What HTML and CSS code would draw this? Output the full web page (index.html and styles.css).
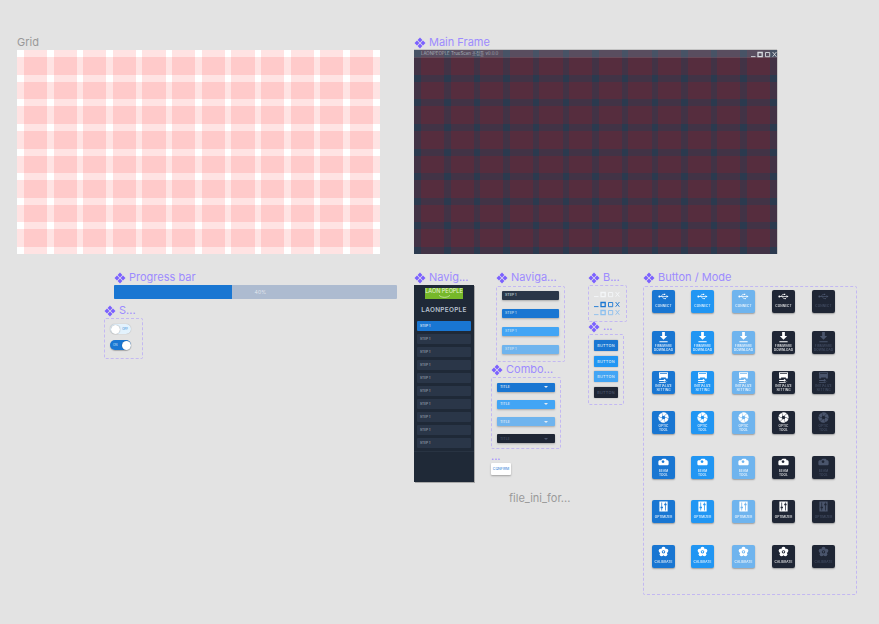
FILE: index.html
```html
<!DOCTYPE html>
<html lang="en">
<head>
<meta charset="utf-8">
<title>LAONPEOPLE canvas</title>
<link rel="stylesheet" href="styles.css">
</head>
<body>
<svg class="defs" width="0" height="0" aria-hidden="true">
  <symbol id="comp" viewBox="0 0 12 12"><path d="M6 .5 8.400 3 6 5.400 3.600 3zM3 3.600 5.400 6 3 8.400.5 6zM9 3.600 11.500 6 9 8.400 6.600 6zM6 6.600 8.400 9 6 11.500 3.600 9z" fill="currentColor"/></symbol>
  <symbol id="usb" viewBox="0 0 12 12"><path d="M1.500 6h8" stroke="currentColor" stroke-width=".8" fill="none"/><path d="M3.500 6 5 3.700h1.600M4.600 6l1.500 2.200h1.200" stroke="currentColor" stroke-width=".7" fill="none"/><circle cx="1.500" cy="6" r="1.100" fill="currentColor"/><path d="M9.200 4.700 11.500 6 9.200 7.300z" fill="currentColor"/><rect x="6.500" y="3" width="1.400" height="1.400" fill="currentColor"/><rect x="7.200" y="7.600" width="1.300" height="1.300" fill="currentColor"/></symbol>
  <symbol id="down" viewBox="0 0 12 12"><path d="M4.500 0h3v4.400H10L6 8.400 2 4.400h2.500zM1.500 10h9v1.300h-9z" fill="currentColor"/></symbol>
  <symbol id="init" viewBox="0 0 12 12"><path d="M1.200 .4h9.600v6.600H8.600V6H3.400v1H1.200zM2.200 1.300v1h7.600v-1z" fill="currentColor" fill-rule="evenodd"/><path d="M3 3.300h6v1.600H3z" fill="currentColor"/><path d="M1.200 8.600h5.200V7.400l2.400 1.700-2.400 1.700V9.800H1.200zM10.800 10.400H8.400v1.200H1.200v-.6h7z" fill="currentColor"/></symbol>
  <symbol id="optic" viewBox="0 0 12 12"><g fill="currentColor"><path id="blade" d="M7.900 6.100 7.300 7.800 8 11.300A5.700 5.700 0 0 0 11.500 7.300z"/><use href="#blade" transform="rotate(60 6 6)"/><use href="#blade" transform="rotate(120 6 6)"/><use href="#blade" transform="rotate(180 6 6)"/><use href="#blade" transform="rotate(240 6 6)"/><use href="#blade" transform="rotate(300 6 6)"/></g></symbol>
  <symbol id="beam" viewBox="0 0 12 12"><path d="M2 3.600h1.600C4 2.400 5 2 6 2h1.600c1 0 1.600.6 1.800 1.600H10c1 0 1.600.7 1.600 1.600v2.400c0 .9-.6 1.400-1.600 1.400H2C1 9 .4 8.500 .4 7.600V5.200C.4 4.300 1 3.600 2 3.600zM5.500 3.600a1.500 1.500 0 1 0 .01 0z" fill="currentColor" fill-rule="evenodd"/></symbol>
  <symbol id="opt" viewBox="0 0 12 12"><path d="M1.500 .5h9v11h-9zM3.700 1.700v4.500h-.9v1.600h.9v2.500h.8V7.800h.9V6.200h-.9V1.700zM7.700 1.700v1.400h-.9v1.600h.9v5.600h.8V4.700h.9V3.100h-.9V1.700z" fill="currentColor" fill-rule="evenodd"/></symbol>
  <mask id="calmask"><rect width="12" height="12" fill="#fff"/><circle cx="6" cy="6.400" r="1.900" fill="#000"/><circle cx="6" cy="6.400" r=".9" fill="#fff"/></mask>
  <symbol id="cal" viewBox="0 0 12 12"><g fill="currentColor" mask="url(#calmask)"><circle cx="6" cy="3" r="2.200"/><circle cx="9.100" cy="5.300" r="2.200"/><circle cx="8" cy="9" r="2.200"/><circle cx="4" cy="9" r="2.200"/><circle cx="2.900" cy="5.300" r="2.200"/><circle cx="6" cy="6.400" r="3.200"/></g></symbol>
  <symbol id="winbtns" viewBox="0 0 26 7"><g fill="none" stroke="currentColor" stroke-width=".9"><path d="M0 5.600h4.500"/><path d="M7 1.500h4.200v4.200H7z" stroke-width="1.300"/><path d="M14.500 1.500h4.200v4.200h-4.200z"/><path d="m21.600 1 3.800 4.800M25.400 1l-3.800 4.800"/></g></symbol>
</svg>

<main class="canvas">
  <section class="comp at-grid">
    <h2 class="plain-label">Grid</h2>
    <div class="gridbox light">
      <div class="cols"><i></i><i></i><i></i><i></i><i></i><i></i><i></i><i></i><i></i><i></i><i></i><i></i></div>
      <div class="rows"><i></i><i></i><i></i><i></i><i></i><i></i><i></i><i></i></div>
    </div>
  </section>

  <section class="comp at-main">
    <h2 class="label"><svg class="ci"><use href="#comp"/></svg>Main Frame</h2>
    <div class="gridbox dark">
      <div class="cols"><i></i><i></i><i></i><i></i><i></i><i></i><i></i><i></i><i></i><i></i><i></i><i></i></div>
      <div class="rows"><i></i><i></i><i></i><i></i><i></i><i></i><i></i><i></i></div>
      <div class="titlebar"><span class="title-text">LAONPEOPLE TrueScan 조정툴 v0.0.0</span><svg class="title-btns"><use href="#winbtns"/></svg></div>
    </div>
  </section>

  <section class="comp at-progress">
    <h2 class="label"><svg class="ci"><use href="#comp"/></svg>Progress bar</h2>
    <div class="progress"><div class="progress-fill"></div><span class="progress-text">40%</span></div>
  </section>

  <section class="comp at-switch">
    <h2 class="label"><svg class="ci"><use href="#comp"/></svg>S...</h2>
    <div class="dashed switches">
      <div class="toggle off"><b class="knob"></b><span>OFF</span></div>
      <div class="toggle on"><span>ON</span><b class="knob"></b></div>
    </div>
  </section>

  <section class="comp at-nav">
    <h2 class="label"><svg class="ci"><use href="#comp"/></svg>Navig...</h2>
    <div class="nav">
      <div class="logo">LAON PEOPLE<svg class="smile" viewBox="0 0 20 5"><path d="M1 .5C5 5 15 5 19 .5" fill="none" stroke="currentColor" stroke-width="1"/></svg></div>
      <div class="brand">LAONPEOPLE</div>
      <ul class="steps">
        <li class="step active">STEP 1</li><li class="step">STEP 1</li><li class="step">STEP 1</li><li class="step">STEP 1</li><li class="step">STEP 1</li>
        <li class="step">STEP 1</li><li class="step">STEP 1</li><li class="step">STEP 1</li><li class="step">STEP 1</li><li class="step">STEP 1</li>
      </ul>
    </div>
  </section>

  <section class="comp at-nav2">
    <h2 class="label lower"><svg class="ci"><use href="#comp"/></svg>Naviga...</h2>
    <div class="dashed nav-states">
      <div class="state s-dark">STEP 1</div>
      <div class="state s-blue">STEP 1</div>
      <div class="state s-sky">STEP 1</div>
      <div class="state s-pale">STEP 1</div>
    </div>
  </section>

  <section class="comp at-combo">
    <h2 class="label"><svg class="ci"><use href="#comp"/></svg>Combo...</h2>
    <div class="dashed combos">
      <div class="combo s-blue">TITLE<i class="caret"></i></div>
      <div class="combo s-sky">TITLE<i class="caret"></i></div>
      <div class="combo s-pale">TITLE<i class="caret"></i></div>
      <div class="combo s-black dim">TITLE<i class="caret"></i></div>
    </div>
  </section>

  <section class="comp at-mini">
    <h2 class="label dots">...</h2>
    <div class="mini-btn">CONFIRM</div>
  </section>

  <div class="file-label">file_ini_for...</div>

  <section class="comp at-b">
    <h2 class="label"><svg class="ci"><use href="#comp"/></svg>B...</h2>
    <div class="dashed winrows">
      <svg class="winrow w-white"><use href="#winbtns"/></svg>
      <svg class="winrow w-blue"><use href="#winbtns"/></svg>
      <svg class="winrow w-pale"><use href="#winbtns"/></svg>
    </div>
  </section>

  <section class="comp at-btns">
    <h2 class="label"><svg class="ci"><use href="#comp"/></svg>...</h2>
    <div class="dashed buttons">
      <div class="btn s-blue">BUTTON</div>
      <div class="btn s-mid">BUTTON</div>
      <div class="btn s-sky">BUTTON</div>
      <div class="btn s-black dim">BUTTON</div>
    </div>
  </section>

  <section class="comp at-mode">
    <h2 class="label lower"><svg class="ci"><use href="#comp"/></svg>Button / Mode</h2>
    <div class="dashed modes">
      <div class="mode s-blue"><svg class="mi"><use href="#usb"/></svg><span class="one">CONNECT</span></div>
      <div class="mode s-mid"><svg class="mi"><use href="#usb"/></svg><span class="one">CONNECT</span></div>
      <div class="mode s-pale"><svg class="mi"><use href="#usb"/></svg><span class="one">CONNECT</span></div>
      <div class="mode s-black"><svg class="mi"><use href="#usb"/></svg><span class="one">CONNECT</span></div>
      <div class="mode s-black dim"><svg class="mi"><use href="#usb"/></svg><span class="one">CONNECT</span></div>

      <div class="mode s-blue"><svg class="mi"><use href="#down"/></svg><span>FIRMWARE<br>DOWNLOAD</span></div>
      <div class="mode s-mid"><svg class="mi"><use href="#down"/></svg><span>FIRMWARE<br>DOWNLOAD</span></div>
      <div class="mode s-pale"><svg class="mi"><use href="#down"/></svg><span>FIRMWARE<br>DOWNLOAD</span></div>
      <div class="mode s-black"><svg class="mi"><use href="#down"/></svg><span>FIRMWARE<br>DOWNLOAD</span></div>
      <div class="mode s-black dim"><svg class="mi"><use href="#down"/></svg><span>FIRMWARE<br>DOWNLOAD</span></div>

      <div class="mode s-blue"><svg class="mi"><use href="#init"/></svg><span>INITIALIZE<br>SETTING</span></div>
      <div class="mode s-mid"><svg class="mi"><use href="#init"/></svg><span>INITIALIZE<br>SETTING</span></div>
      <div class="mode s-pale"><svg class="mi"><use href="#init"/></svg><span>INITIALIZE<br>SETTING</span></div>
      <div class="mode s-black"><svg class="mi"><use href="#init"/></svg><span>INITIALIZE<br>SETTING</span></div>
      <div class="mode s-black dim"><svg class="mi"><use href="#init"/></svg><span>INITIALIZE<br>SETTING</span></div>

      <div class="mode s-blue"><svg class="mi"><use href="#optic"/></svg><span>OPTIC<br>TOOL</span></div>
      <div class="mode s-mid"><svg class="mi"><use href="#optic"/></svg><span>OPTIC<br>TOOL</span></div>
      <div class="mode s-pale"><svg class="mi"><use href="#optic"/></svg><span>OPTIC<br>TOOL</span></div>
      <div class="mode s-black"><svg class="mi"><use href="#optic"/></svg><span>OPTIC<br>TOOL</span></div>
      <div class="mode s-black dim"><svg class="mi"><use href="#optic"/></svg><span>OPTIC<br>TOOL</span></div>

      <div class="mode s-blue"><svg class="mi"><use href="#beam"/></svg><span>BEAM<br>TOOL</span></div>
      <div class="mode s-mid"><svg class="mi"><use href="#beam"/></svg><span>BEAM<br>TOOL</span></div>
      <div class="mode s-pale"><svg class="mi"><use href="#beam"/></svg><span>BEAM<br>TOOL</span></div>
      <div class="mode s-black"><svg class="mi"><use href="#beam"/></svg><span>BEAM<br>TOOL</span></div>
      <div class="mode s-black dim"><svg class="mi"><use href="#beam"/></svg><span>BEAM<br>TOOL</span></div>

      <div class="mode s-blue"><svg class="mi"><use href="#opt"/></svg><span class="one low">OPTIMIZER</span></div>
      <div class="mode s-mid"><svg class="mi"><use href="#opt"/></svg><span class="one low">OPTIMIZER</span></div>
      <div class="mode s-pale"><svg class="mi"><use href="#opt"/></svg><span class="one low">OPTIMIZER</span></div>
      <div class="mode s-black"><svg class="mi"><use href="#opt"/></svg><span class="one low">OPTIMIZER</span></div>
      <div class="mode s-black dim"><svg class="mi"><use href="#opt"/></svg><span class="one low">OPTIMIZER</span></div>

      <div class="mode s-blue"><svg class="mi"><use href="#cal"/></svg><span class="one low">CALIBRATE</span></div>
      <div class="mode s-mid"><svg class="mi"><use href="#cal"/></svg><span class="one low">CALIBRATE</span></div>
      <div class="mode s-pale"><svg class="mi"><use href="#cal"/></svg><span class="one low">CALIBRATE</span></div>
      <div class="mode s-black"><svg class="mi"><use href="#cal"/></svg><span class="one low">CALIBRATE</span></div>
      <div class="mode s-black dim"><svg class="mi"><use href="#cal"/></svg><span class="one low">CALIBRATE</span></div>
    </div>
  </section>
</main>
</body>
</html>
```

FILE: styles.css
```css
* { box-sizing: border-box; }
html, body { margin: 0; padding: 0; }
body { background: #e3e3e3; font-family: Inter, "Noto Sans CJK KR", sans-serif; overflow: hidden; }
.defs { position: absolute; }
.canvas { position: relative; width: 879px; height: 624px; }

/* Frames sit on a free canvas */
.comp { position: absolute; }
.at-grid { left: 17px; top: 35px; width: 363px; }
.at-main { left: 414px; top: 35px; width: 363px; }
.at-progress { left: 114px; top: 270px; width: 283px; }
.at-switch { left: 104px; top: 303px; width: 39px; }
.at-nav { left: 414px; top: 270px; width: 60px; }
.at-nav2 { left: 496px; top: 270px; width: 69px; }
.at-combo { left: 491px; top: 362px; width: 70px; }
.at-mini { left: 491px; top: 449px; width: 40px; }
.at-b { left: 588px; top: 270px; width: 39px; }
.at-btns { left: 588px; top: 319px; width: 36px; }
.at-mode { left: 643px; top: 270px; width: 214px; }
.file-label { position: absolute; left: 509px; top: 491px; font-size: 11px; line-height: 14px; color: #9a9a9a; }

/* Labels */
.label, .plain-label { margin: 0; height: 15px; font-size: 11px; line-height: 15px; font-weight: 400; white-space: nowrap; display: flex; align-items: center; }
.plain-label { color: #999; }
.label { color: #9d8bff; }
.lower { margin-bottom: 1px; }
.ci { width: 12px; height: 12px; margin-right: 3px; color: #7b61ff; flex: none; }
.dots { height: 14px; }

/* Layout grids */
.gridbox { display: grid; height: 204px; }
.gridbox > * { grid-area: 1 / 1; }
.light { background: #fff; }
.dark { background: #2b3a4f; box-shadow: 0 -1px 0 #c4c4c4, 1px 0 0 #c4c4c4; }
.cols { display: grid; grid-template-columns: repeat(12, 1fr); column-gap: 6.400px; padding: 0 7px; }
.rows { display: grid; grid-template-rows: repeat(8, 1fr); row-gap: 7px; padding: 7px 0; }
.cols i, .rows i { background: rgba(255, 0, 0, .11); }
.titlebar { align-self: start; height: 8px; padding: 0 .5px 0 7px; display: flex; align-items: center; justify-content: space-between; background: rgba(185, 185, 195, .2); }
.title-text { font-size: 4.400px; line-height: 8px; color: #a3aab5; white-space: nowrap; }
.title-btns { width: 26px; height: 7px; color: #d8dbe0; }

/* Progress */
.progress { height: 14px; background: #adbbd0; border-radius: 1px; display: flex; align-items: center; }
.progress-fill { width: 117.500px; height: 100%; background: #1976d2; border-radius: 1px 0 0 1px; }
.progress-text { margin-left: 23px; font-size: 5px; color: #e3e8ef; letter-spacing: .2px; }

/* Dashed component sets */
.dashed { border: 1px dashed #c3b8f2; border-radius: 2px; }
.switches { height: 41px; padding: 5px 5px; display: flex; flex-direction: column; gap: 6px; }
.toggle { width: 21px; height: 10px; border-radius: 5px; display: flex; align-items: center; justify-content: space-between; font-size: 3px; padding: 0 .5px; }
.toggle.off { background: #e3f2fd; color: #1976d2; padding-right: 3px; box-shadow: 0 0 1px rgba(0, 0, 0, .3); }
.toggle.on { background: #1976d2; color: #cfe4f8; padding-left: 3px; box-shadow: 0 1px 1px rgba(0, 0, 0, .25); }
.knob { width: 9px; height: 9px; border-radius: 50%; background: #fff; box-shadow: 0 0 1px rgba(0, 0, 0, .5); }

/* Left navigation */
.nav { height: 197px; background: #1f2937; box-shadow: 1px 1px 0 #a9a9a9; padding-top: 3px; display: flex; flex-direction: column; align-items: center; }
.logo { width: 38px; height: 11px; background: #76b82a; color: #eaf5dc; font-size: 5.500px; line-height: 7px; text-align: center; white-space: nowrap; }
.smile { display: block; width: 13px; height: 3px; margin: 0 auto; color: #eaf5dc; }
.brand { margin-top: 6px; height: 11px; font-size: 6.400px; line-height: 11px; font-weight: 600; letter-spacing: .3px; color: #b8c2d0; }
.steps { list-style: none; margin: 5px 0 0; padding: 0 0 3px; width: 100%; border-bottom: 1px solid #283342; display: flex; flex-direction: column; gap: 3px; align-items: center; }
.step { width: 54px; height: 10px; padding-left: 3px; background: #2a3648; border-radius: 1px; font-size: 3.200px; line-height: 10px; font-weight: 500; color: #a0aaba; }
.step.active { background: #1976d2; color: #f2f6fb; }

/* Colour states */
.s-dark { background: #2a3648; }
.s-blue { background: #1976d2; }
.s-mid { background: #2196f3; }
.s-sky { background: #42a5f5; }
.s-pale { background: #6fb4ee; }
.s-black { background: #1f2635; }

/* Navigation states */
.nav-states { height: 76px; padding: 4px 5px; display: flex; flex-direction: column; gap: 9px; }
.state { height: 9px; padding-left: 3px; font-size: 3.600px; line-height: 9px; color: #dfe7f0; box-shadow: 0 1px 2px rgba(0, 0, 0, .25); border-radius: 1px; }

/* Combo */
.combos { height: 72px; padding: 5px 5px; display: flex; flex-direction: column; gap: 8.500px; }
.combo { height: 9px; padding: 0 7px 0 3px; font-size: 3.600px; font-weight: 500; color: #e4ecf5; display: flex; align-items: center; justify-content: space-between; box-shadow: 0 1px 2px rgba(0, 0, 0, .25); border-radius: 1px; }
.caret { width: 0; height: 0; border: 2px solid transparent; border-top: 2px solid currentColor; border-bottom: 0; }
.mini-btn { width: 20px; height: 12px; background: #fff; border-radius: 1px; box-shadow: 0 1px 2px rgba(0, 0, 0, .3); font-size: 3.500px; line-height: 12px; text-align: center; color: #1976d2; }

/* Window buttons */
.winrows { height: 37px; padding: 5px 5px 0; display: flex; flex-direction: column; gap: 3px; }
.winrow { width: 26px; height: 7px; flex: none; }
.w-white { color: #f4f6f8; }
.w-blue { color: #1976d2; }
.w-pale { color: #8cc0ee; margin-top: -2px; }

/* Buttons */
.buttons { height: 71px; padding: 5px 5px; display: flex; flex-direction: column; gap: 4.500px; }
.btn { height: 11px; font-size: 3.800px; line-height: 11px; font-weight: 500; letter-spacing: .3px; text-align: center; color: #dfe9f4; box-shadow: 0 0 1.500px rgba(0, 0, 0, .4); border-radius: 1px; }
.dim { color: #4a556c; }

/* Mode buttons */
.modes { height: 309px; padding: 3px 0 0 8px; display: grid; grid-template-columns: 39px 41px 40px 40px 23px; grid-template-rows: 41px 40px 40px 45px 44px 45px 23px; }
.mode { width: 23px; height: 23px; padding-top: 1px; border-radius: 2px; display: flex; flex-direction: column; align-items: center; color: #fff; box-shadow: 0 1px 1.500px rgba(0, 0, 0, .3); }
.mode.dim { color: #4a556c; }
.mi { width: 11px; height: 11px; flex: none; }
.mode span { margin-top: 1px; font-size: 3.200px; line-height: 4px; font-weight: 500; letter-spacing: .05px; text-align: center; white-space: nowrap; opacity: .9; }
.mode span.one { margin-top: 2px; }
.mode span.low { margin-top: 3px; }
```
